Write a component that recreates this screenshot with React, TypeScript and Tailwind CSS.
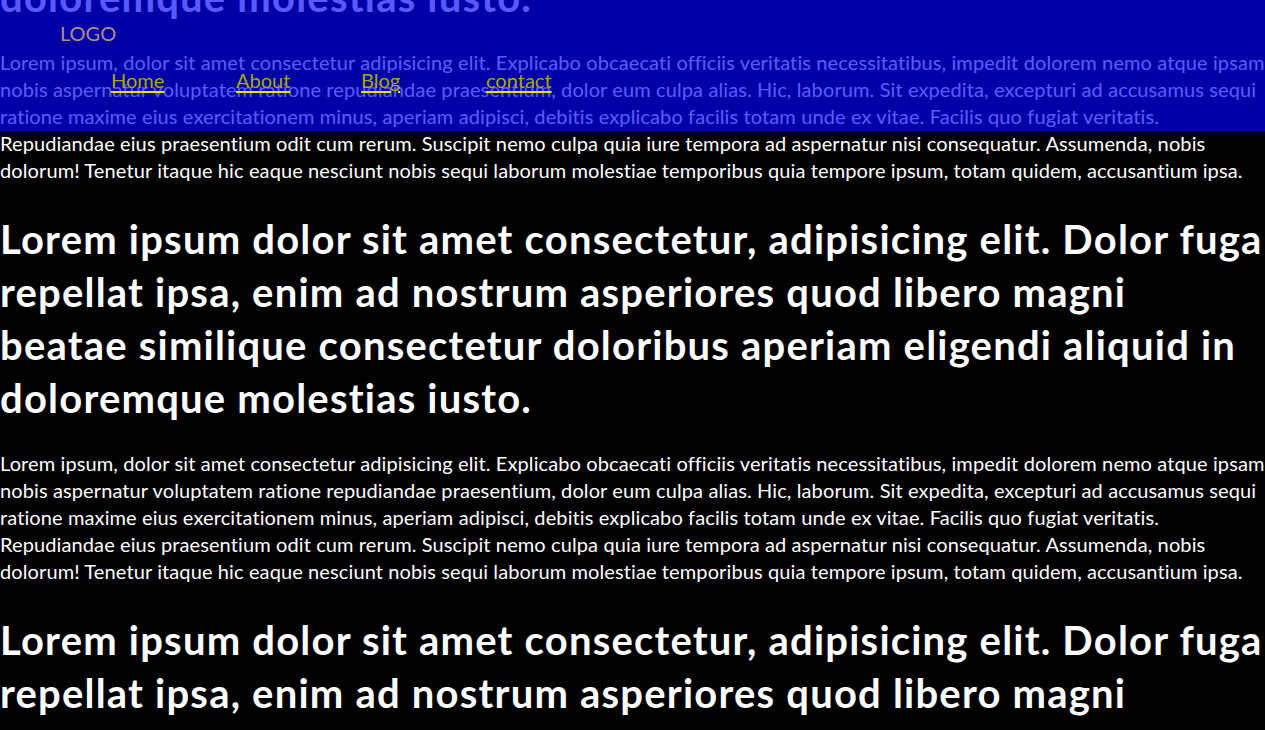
const headingLines = [
  "Lorem ipsum dolor sit amet consectetur, adipisicing elit. Dolor fuga",
  "repellat ipsa, enim ad nostrum asperiores quod libero magni",
  "beatae similique consectetur doloribus aperiam eligendi aliquid in",
  "doloremque molestias iusto.",
];

const paragraphLines = [
  "Lorem ipsum, dolor sit amet consectetur adipisicing elit. Explicabo obcaecati officiis veritatis necessitatibus, impedit dolorem nemo atque ipsam",
  "nobis aspernatur voluptatem ratione repudiandae praesentium, dolor eum culpa alias. Hic, laborum. Sit expedita, excepturi ad accusamus sequi",
  "ratione maxime eius exercitationem minus, aperiam adipisci, debitis explicabo facilis totam unde ex vitae. Facilis quo fugiat veritatis.",
  "Repudiandae eius praesentium odit cum rerum. Suscipit nemo culpa quia iure tempora ad aspernatur nisi consequatur. Assumenda, nobis",
  "dolorum! Tenetur itaque hic eaque nesciunt nobis sequi laborum molestiae temporibus quia tempore ipsum, totam quidem, accusantium ipsa.",
];

const links = ["Home", "About", "Blog", "contact"];

const Section = () => (
  <>
    <h1 className="text-[40px] leading-[53px] font-bold tracking-[1.2px] pt-[2px] -mb-[2px]">
      {headingLines.map((line, i) => (
        <span key={i} className="block whitespace-nowrap">{line}</span>
      ))}
    </h1>
    <p className="text-[20px] leading-[27px] tracking-[0.11px]">
      {paragraphLines.map((line, i) => (
        <span key={i} className="block whitespace-nowrap">{line}</span>
      ))}
    </p>
  </>
);

export default function App() {
  return (
    <div className="relative h-[730px] overflow-hidden bg-black text-white font-['Lato',sans-serif]">
      <header className="absolute top-0 left-0 right-0 z-10 h-[131px] bg-[rgba(0,0,255,0.65)] text-[20px] leading-[27px]">
        <div className="pt-[20px] pl-[60px] text-[#b48c8c]">LOGO</div>
        <ul className="flex pt-[20px] pl-[111px]">
          {links.map((link) => (
            <li key={link} className="w-[125px]">
              <a href="#" className="text-[#a8a800] underline decoration-2 decoration-[#e6e600] underline-offset-[3px]">
                {link}
              </a>
            </li>
          ))}
        </ul>
      </header>

      <main className="flex flex-col gap-[27px] -mt-[190px]">
        <Section />
        <Section />
        <Section />
      </main>
    </div>
  );
}
